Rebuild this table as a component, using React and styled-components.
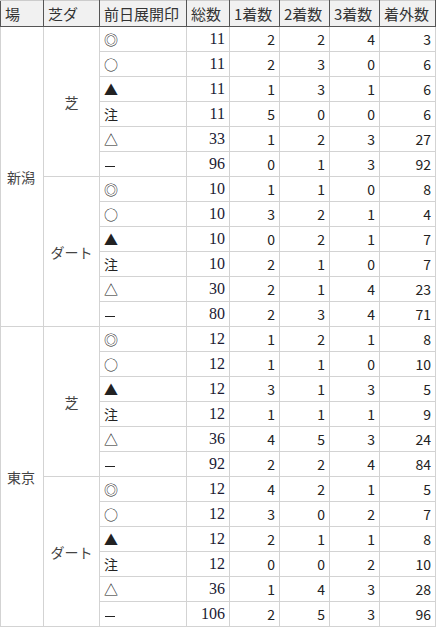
import React from "react";
import styled, { createGlobalStyle } from "styled-components";

const GlobalStyle = createGlobalStyle`
html, body {
    margin: 0;
    padding: 0;
    background: #fff;
}
body {
    font-family: "Noto Sans CJK JP", "Noto Sans", sans-serif;
    color: #333;
}
`;

const Table = styled.table`
border-collapse: collapse;
table-layout: fixed;
width: 435px;
font-size: 14px;
`;

const Row = styled.tr`
height: 25px;
`;

const HeadCell = styled.th`
height: 25px;
padding: 0 4px;
background: #f1f1f1;
border: 1px solid #555;
border-top: 1px solid #ccc;
text-align: left;
font-weight: normal;
font-size: 15px;
line-height: 20px;
color: #333;
white-space: nowrap;
overflow: hidden;
`;

const Cell = styled.td`
height: 24px;
padding: 0 4px;
border: 1px solid #d3d3d3;
line-height: 18px;
white-space: nowrap;
overflow: hidden;
text-align: ${(p) => (p.$num ? "right" : p.$center ? "center" : "left")};
font-family: ${(p) =>
    p.$serif ? '"Liberation Serif", serif' : '"Noto Sans CJK JP", "Noto Sans", sans-serif'};
font-size: ${(p) => (p.$serif ? "16px" : "14px")};
color: ${(p) => (p.$muted ? "#444" : p.$serif ? "#1a1a33" : "#222")};
`;

const PlaceCell = styled(Cell)`
padding-left: 6px;
`;

const Dash = styled.span`
display: inline-block;
width: 10px;
height: 1px;
margin-left: 1px;
vertical-align: middle;
background: #222;
`;

const headers = ["場", "芝ダ", "前日展開印", "総数", "1着数", "2着数", "3着数", "着外数"];
const widths = [43, 56, 87, 43, 50, 50, 50, 56];

const marks = ["◎", "○", "▲", "注", "△", null];

const groups = [
    {
        place: "新潟",
        tracks: [
            { name: "芝", rows: [[11, 2, 2, 4, 3], [11, 2, 3, 0, 6], [11, 1, 3, 1, 6], [11, 5, 0, 0, 6], [33, 1, 2, 3, 27], [96, 0, 1, 3, 92]] },
            { name: "ダート", rows: [[10, 1, 1, 0, 8], [10, 3, 2, 1, 4], [10, 0, 2, 1, 7], [10, 2, 1, 0, 7], [30, 2, 1, 4, 23], [80, 2, 3, 4, 71]] },
        ],
    },
    {
        place: "東京",
        tracks: [
            { name: "芝", rows: [[12, 1, 2, 1, 8], [12, 1, 1, 0, 10], [12, 3, 1, 3, 5], [12, 1, 1, 1, 9], [36, 4, 5, 3, 24], [92, 2, 2, 4, 84]] },
            { name: "ダート", rows: [[12, 4, 2, 1, 5], [12, 3, 0, 2, 7], [12, 2, 1, 1, 8], [12, 0, 0, 2, 10], [36, 1, 4, 3, 28], [106, 2, 5, 3, 96]] },
        ],
    },
];

function App() {
    return (
        <>
            <GlobalStyle />
            <Table>
                <colgroup>
                    {widths.map((w, i) => (
                        <col key={i} style={{ width: w }} />
                    ))}
                </colgroup>
                <thead>
                    <tr>
                        {headers.map((h) => (
                            <HeadCell key={h}>{h}</HeadCell>
                        ))}
                    </tr>
                </thead>
                <tbody>
                    {groups.map((g) =>
                        g.tracks.map((t, ti) =>
                            t.rows.map((r, ri) => (
                                <Row key={g.place + t.name + ri}>
                                    {ti === 0 && ri === 0 && (
                                        <PlaceCell rowSpan={12} $muted>{g.place}</PlaceCell>
                                    )}
                                    {ri === 0 && (
                                        <Cell rowSpan={6} $center $muted>{t.name}</Cell>
                                    )}
                                    <Cell>{marks[ri] || <Dash aria-label="−" />}</Cell>
                                    {r.map((v, vi) => (
                                        <Cell key={vi} $num $serif={vi === 0}>{v}</Cell>
                                    ))}
                                </Row>
                            ))
                        )
                    )}
                </tbody>
            </Table>
        </>
    );
}

export default App;
